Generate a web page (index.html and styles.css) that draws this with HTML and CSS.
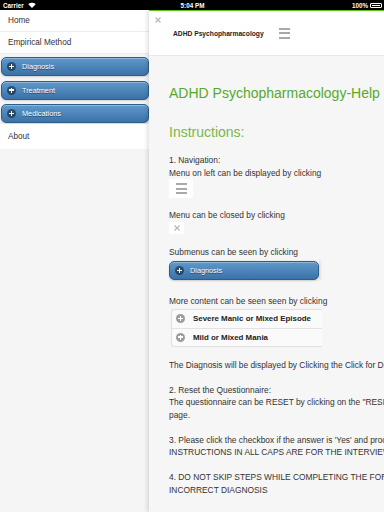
FILE: index.html
```html
<!DOCTYPE html>
<html lang="en">
<head>
    <meta charset="UTF-8">
    <meta name="viewport" content="width=device-width, initial-scale=1.0">
    <title>ADHD Psychopharmacology - Help</title>
    <link rel="stylesheet" href="styles.css">
</head>
<body>

<div class="status">
    <div class="status-left">
        Carrier
        <svg class="wifi" width="8" height="6" viewBox="0 0 8 6">
            <path d="M4 6 L0.3 2.2 A5.4 5.4 0 0 1 7.7 2.2 Z" fill="#fff"/>
        </svg>
    </div>
    <div class="status-time">5:04 PM</div>
    <div class="status-right">
        100%
        <span class="battery"><span class="battery-fill"></span></span>
    </div>
</div>

<div class="app">
    <nav class="panel">
        <a href="#" class="panel-item">Home</a>
        <a href="#" class="panel-item">Empirical Method</a>
        <div class="panel-buttons">
            <a href="#" class="blue-btn"><span class="plus-icon"></span>Diagnosis</a>
            <a href="#" class="blue-btn"><span class="plus-icon"></span>Treatment</a>
            <a href="#" class="blue-btn"><span class="plus-icon"></span>Medications</a>
        </div>
        <a href="#" class="panel-item about">About</a>
    </nav>

    <main class="page">
        <header class="page-head">
            <span class="close-x">
                <svg width="6" height="6" viewBox="0 0 6 6"><path d="M0.5 0.5 L5.5 5.5 M5.5 0.5 L0.5 5.5" stroke="#b5b5b5" stroke-width="1.1"/></svg>
            </span>
            <h1>ADHD Psychopharmacology</h1>
            <span class="burger"><i></i><i></i><i></i></span>
        </header>

        <div class="content">
            <h2 class="help-title">ADHD Psychopharmacology-Help</h2>
            <h3 class="instr-title">Instructions:</h3>

            <p class="line first">1. Navigation:</p>
            <p class="line">Menu on left can be displayed by clicking</p>
            <div class="demo-burger"><span class="burger"><i></i><i></i><i></i></span></div>

            <p class="line after-demo">Menu can be closed by clicking</p>
            <div class="demo-close">
                <svg width="6" height="6" viewBox="0 0 6 6"><path d="M0.5 0.5 L5.5 5.5 M5.5 0.5 L0.5 5.5" stroke="#b5b5b5" stroke-width="1.1"/></svg>
            </div>

            <p class="line blank-before">Submenus can be seen by clicking</p>
            <div class="demo-btn"><span class="blue-btn"><span class="plus-icon"></span>Diagnosis</span></div>

            <p class="line more">More content can be seen seen by clicking</p>
            <div class="collapsible">
                <div class="coll-row"><span class="grey-plus"></span>Severe Manic or Mixed Episode</div>
                <div class="coll-row"><span class="grey-plus"></span>Mild or Mixed Mania</div>
            </div>

            <p class="line after-coll">The Diagnosis will be displayed by Clicking the Click for Diagnosis button</p>

            <div class="para">
                <p class="line">2. Reset the Questionnaire:</p>
                <p class="line">The questionnaire can be RESET by clicking on the "RESET" button on the top of the</p>
                <p class="line">page.</p>
            </div>
            <div class="para">
                <p class="line">3. Please click the checkbox if the answer is 'Yes' and proceed to the next question.</p>
                <p class="line">INSTRUCTIONS IN ALL CAPS ARE FOR THE INTERVIEWER</p>
            </div>
            <div class="para">
                <p class="line">4. DO NOT SKIP STEPS WHILE COMPLETING THE FORM AS IT MAY LEAD TO AN</p>
                <p class="line">INCORRECT DIAGNOSIS</p>
            </div>
        </div>
    </main>
</div>

</body>
</html>
```

FILE: styles.css
```css
/* Global Styles */
* {
    box-sizing: border-box;
    margin: 0;
    padding: 0;
    font-family: 'Liberation Sans', Arial, sans-serif;
}
body {
    width: 384px;
    height: 512px;
    overflow: hidden;
    background-color: #f6f6f6;
    color: #333;
}
a {
    text-decoration: none;
    color: inherit;
}

/* Status bar */
.status {
    height: 10px;
    background-color: #000;
    color: #fff;
    display: grid;
    grid-template-columns: 1fr auto 1fr;
    align-items: center;
    padding: 0 2px 0 3px;
    font-size: 6.3px;
    font-weight: 700;
}
.status-left {
    display: flex;
    align-items: center;
    gap: 4px;
}
.status-right {
    display: flex;
    align-items: center;
    justify-content: flex-end;
    gap: 2px;
}
.battery {
    width: 12px;
    height: 5px;
    border: 1px solid #fff;
    border-radius: 1px;
    padding: 1px;
    display: flex;
}
.battery-fill {
    flex: 1;
    background-color: #fff;
}

/* Layout */
.app {
    display: flex;
    height: 502px;
}

/* Left panel */
.panel {
    width: 149px;
    flex: none;
    background-color: #f5f5f5;
    display: flex;
    flex-direction: column;
}
.panel-item {
    height: 22px;
    display: flex;
    align-items: center;
    padding-left: 8px;
    background-color: #fff;
    border-bottom: 1px solid #ececec;
    font-size: 8.2px;
    color: #333;
}
.panel-item.about {
    height: 25px;
    border-bottom: none;
}
.panel-buttons {
    display: flex;
    flex-direction: column;
    gap: 4.5px;
    padding: 3px 0 1px 1px;
}

/* Blue buttons */
.blue-btn {
    height: 19px;
    display: flex;
    align-items: center;
    padding-left: 5px;
    border: 1px solid #2c5d8b;
    border-radius: 5px;
    background: linear-gradient(#5f99cb, #3b72a8);
    box-shadow: inset 0 1px 0 rgba(255, 255, 255, 0.3), 0 1px 2px rgba(0, 0, 0, 0.15);
    color: #fff;
    font-size: 7.3px;
    text-shadow: 0 1px 0 #1f4870;
}
.plus-icon {
    width: 9px;
    height: 9px;
    border-radius: 50%;
    background-color: rgba(0, 0, 0, 0.45);
    margin-right: 6px;
    position: relative;
}
.plus-icon::before,
.plus-icon::after {
    content: "";
    position: absolute;
    background-color: #fff;
    left: 50%;
    top: 50%;
}
.plus-icon::before {
    width: 5px;
    height: 1.4px;
    margin: -0.7px 0 0 -2.5px;
}
.plus-icon::after {
    width: 1.4px;
    height: 5px;
    margin: -2.5px 0 0 -0.7px;
}

/* Main page */
.page {
    flex: none;
    width: 420px;
    background-color: #f6f6f6;
    border-top: 1px solid #5ec21c;
    box-shadow: -2px 0 4px rgba(0, 0, 0, 0.12);
}
.page-head {
    height: 45px;
    background-color: #fff;
    border-bottom: 1px solid #e8e8e8;
    display: flex;
    align-items: center;
    padding-left: 6px;
}
.close-x {
    align-self: flex-start;
    margin-top: 6px;
    width: 6px;
    height: 6px;
    margin-right: 12px;
    display: flex;
}
.page-head h1 {
    font-size: 6.7px;
    font-weight: 700;
    color: #222;
    margin-right: 15px;
}
.burger {
    display: flex;
    flex-direction: column;
    gap: 2.5px;
    width: 11px;
}
.burger i {
    display: block;
    height: 2px;
    background-color: #a9a9a9;
}

/* Content */
.content {
    padding-left: 20px;
}
.help-title {
    font-size: 14px;
    line-height: 16px;
    font-weight: 400;
    color: #57a92a;
    margin-top: 29px;
    white-space: nowrap;
}
.instr-title {
    font-size: 14px;
    line-height: 16px;
    font-weight: 400;
    color: #76b84c;
    margin-top: 23px;
}
.line {
    font-size: 8.4px;
    line-height: 12.5px;
    color: #333;
    white-space: nowrap;
}
.line.first {
    margin-top: 14px;
}
.line.after-demo {
    margin-top: 11px;
}
.line.blank-before {
    margin-top: 12.5px;
}
.line.more {
    margin-top: 14.5px;
}
.line.after-coll {
    margin-top: 12px;
}
.para {
    margin-top: 12.5px;
}
.demo-burger {
    width: 24px;
    height: 19px;
    background-color: #fff;
    display: flex;
    align-items: center;
    justify-content: center;
}
.demo-close {
    width: 15px;
    height: 12px;
    background-color: #fff;
    display: flex;
    align-items: center;
    justify-content: center;
}
.demo-btn {
    width: 150px;
    margin-top: 2.5px;
    box-shadow: 2px 0 2px rgba(0, 0, 0, 0.08);
}
.collapsible {
    width: 151px;
    margin: 1.5px 0 0 2px;
    border: 1px solid #e0e0e0;
    border-right: none;
    border-radius: 3px 0 0 3px;
    background-color: #fafafa;
}
.coll-row {
    height: 18px;
    display: flex;
    align-items: center;
    padding-left: 4px;
    font-size: 7.9px;
    font-weight: 700;
    color: #222;
}
.coll-row + .coll-row {
    border-top: 1px solid #e3e3e3;
}
.grey-plus {
    width: 9px;
    height: 9px;
    border-radius: 50%;
    background-color: #9c9c9c;
    margin-right: 8px;
    position: relative;
}
.grey-plus::before,
.grey-plus::after {
    content: "";
    position: absolute;
    background-color: #fff;
    left: 50%;
    top: 50%;
}
.grey-plus::before {
    width: 5px;
    height: 1.4px;
    margin: -0.7px 0 0 -2.5px;
}
.grey-plus::after {
    width: 1.4px;
    height: 5px;
    margin: -2.5px 0 0 -0.7px;
}
```
